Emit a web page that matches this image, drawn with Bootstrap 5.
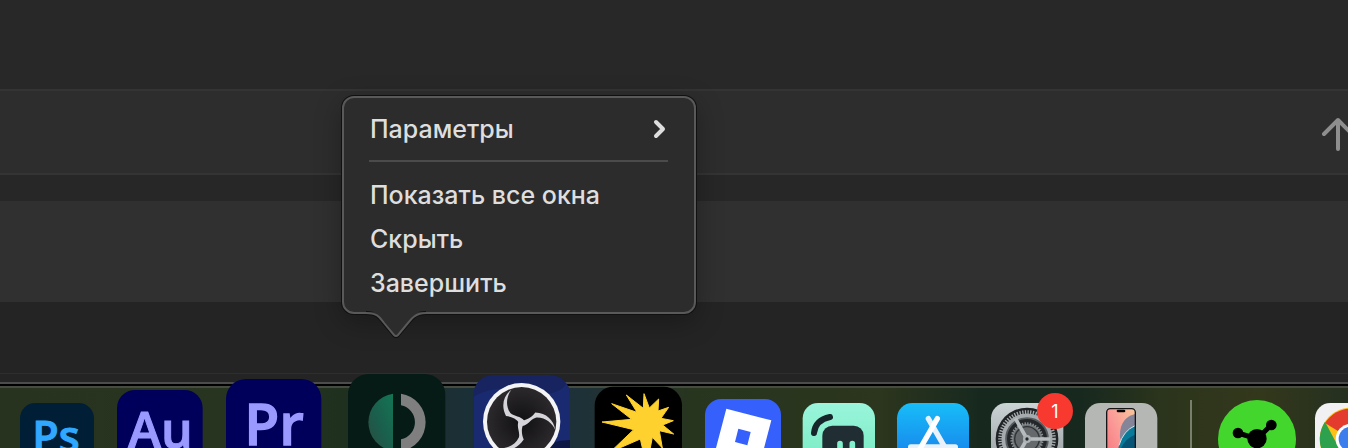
<!DOCTYPE html>
<html lang="ru">
<head>
<meta charset="utf-8">
<meta name="viewport" content="width=device-width, initial-scale=1">
<title>Dock</title>
<link href="https://cdn.jsdelivr.net/npm/bootstrap@5.3.0/dist/css/bootstrap.min.css" rel="stylesheet">
<style>
  body { font-family: Inter, "Liberation Sans", sans-serif; background: #242424; color: #dedede; }
  .desktop { height: 100vh; }
  .pane-top { height: 89px; background: #282828; }
  .pane-bar { height: 86px; padding-top: 4px; background: #2d2d2d; border-top: 2px solid #343434; border-bottom: 2px solid #343434; }
  .pane-gap { height: 26px; background: #272727; }
  .pane-input { height: 101px; background: #303030; }
  .pane-foot { height: 72px; background: #242424; border-bottom: 1px solid #2e2e2e; }
  .pane-edge { height: 10px; background: #242424; border-bottom: 2px solid #4c4c4c; }
  .send-link { margin-right: -8px; }
  .dock-shelf {
    height: 92px; gap: 22px; padding-left: 20px;
    border-top: 2px solid #000;
    box-shadow: inset 0 2px #454b40;
    background: linear-gradient(90deg, #27331f 0, #273420 220px, #20301f 340px, #1b2f36 460px, #1e3138 580px, #27351f 690px, #2c351d 880px, #17291f 980px, #17281f 1080px, #2b341c 1160px, #33381b 1260px, #253020 100%);
  }
  .dock-app svg { display: block; overflow: visible; }
  .dock-rule { width: 17px; height: 76px; padding-left: 11px; }
  .dock-rule::before { content: ""; display: block; width: 2px; height: 100%; background: #7a7f6c; }
  .dock-count { left: 46px; top: -10px; width: 36px; height: 36px; background: #f8392f; font-size: 18px; }
  .adobe { font-family: "Open Sans", "Noto Sans", sans-serif; font-weight: 600; }
  .popup {
    left: 342px; top: 96px; width: 354px; padding: 9px 26px 7px 25px; margin: 0;
    background: #2c2c2c; border: 2px solid #595959; border-radius: 12px;
    box-shadow: 0 0 0 1px #101010, 0 8px 28px rgba(0,0,0,.3);
  }
  .popup-item { height: 44px; padding: 0 1px; font-size: 25px; line-height: 44px; font-weight: 500; color: #dedede; }
  .popup-line { height: 2px; margin: 9px 0 11px; background: #4b4b4b; opacity: 1; border: 0; }
  .popup-tail { left: 20px; top: 100%; display: block; overflow: visible; }
</style>
</head>
<body>
<div class="desktop position-relative overflow-hidden">
  <main>
    <div class="pane-top"></div>
    <div class="pane-bar d-flex align-items-center justify-content-end">
      <a href="#" class="send-link" aria-label="Отправить">
        <svg class="d-block" width="36" height="36" viewBox="0 0 36 36" fill="none" stroke="#8e8e8e" stroke-width="4" stroke-linecap="round" stroke-linejoin="round"><path d="M18 33V4M4 18 18 4l14 14"/></svg>
      </a>
    </div>
    <div class="pane-gap"></div>
    <div class="pane-input"></div>
    <div class="pane-foot"></div>
    <div class="pane-edge"></div>
  </main>

  <nav class="dock-shelf d-flex align-items-end" aria-label="Dock">
    <button class="dock-app btn p-0 border-0 rounded-0 flex-shrink-0" aria-label="Photoshop">
      <svg width="75" height="73" viewBox="60 129 225 219"><rect x="60" y="129" width="222" height="219" rx="46" fill="#001e36"/><text class="adobe" x="97" y="277" font-size="129" fill="#31a8ff" stroke="#31a8ff" stroke-width="3">Ps</text></svg>
    </button>
    <button class="dock-app btn p-0 border-0 rounded-0 flex-shrink-0" aria-label="Audition">
      <svg width="87" height="86" viewBox="351 90 261 258"><rect x="351" y="90" width="257" height="258" rx="54" fill="#00005b"/><text class="adobe" x="384" y="263" font-size="150" fill="#9999ff" stroke="#9999ff" stroke-width="3">Au</text></svg>
    </button>
    <button class="dock-app btn p-0 border-0 rounded-0 flex-shrink-0" aria-label="Premiere Pro">
      <svg width="98" height="97" viewBox="18 57 294 291"><rect x="18" y="57" width="286" height="291" rx="60" fill="#00005b"/><text class="adobe" x="73" y="254" font-size="171" fill="#9999ff" stroke="#9999ff" stroke-width="4">Pr</text></svg>
    </button>
    <button class="dock-app btn p-0 border-0 rounded-0 flex-shrink-0" aria-label="Монитор">
      <svg width="101" height="102" viewBox="378 42 303 306">
        <defs><linearGradient id="teal" x1="1" y1="0" x2="0" y2="1"><stop offset="0" stop-color="#137554"/><stop offset=".55" stop-color="#1b5e4c"/><stop offset="1" stop-color="#2a4c40"/></linearGradient></defs>
        <rect x="384" y="42" width="292" height="306" rx="62" fill="#061b15"/>
        <path d="M519 101V273A87 87 0 0 1 519 101Z" fill="url(#teal)"/>
        <path d="M543 101A87 87 0 0 1 543 273V238A52 52 0 0 0 543 136Z" fill="#7f7f7f"/>
      </svg>
    </button>
    <button class="dock-app btn p-0 border-0 rounded-0 flex-shrink-0" aria-label="OBS">
      <svg width="103" height="101" viewBox="27 45 309 303">
        <defs>
          <clipPath id="obsClip"><rect x="40" y="45" width="290" height="303" rx="60"/></clipPath>
          <radialGradient id="obsDark"><stop offset="0" stop-color="#100f12"/><stop offset="1" stop-color="#2b292c"/></radialGradient>
        </defs>
        <g clip-path="url(#obsClip)"><rect x="40" y="45" width="290" height="303" fill="#17245f"/><path d="M40 110Q110 70 200 95T330 60V348H40Z" fill="#1a2a70"/><path d="M270 250Q300 240 330 240V348H250Z" fill="#0c1746"/></g>
        <circle cx="185" cy="185" r="116" fill="#f4f4f6"/><circle cx="185" cy="185" r="104" fill="url(#obsDark)"/>
        <g fill="#d5d4d8">
          <path d="M-31-99C-56-78-62-50-47-20C-32-18-16-12-7 2L7-7C-3-20-22-18-34-29C-50-52-45-80-31-99Z" transform="translate(185 188)"/>
          <path d="M-31-99C-56-78-62-50-47-20C-32-18-16-12-7 2L7-7C-3-20-22-18-34-29C-50-52-45-80-31-99Z" transform="translate(185 188) rotate(120)"/>
          <path d="M-31-99C-56-78-62-50-47-20C-32-18-16-12-7 2L7-7C-3-20-22-18-34-29C-50-52-45-80-31-99Z" transform="translate(185 188) rotate(240)"/>
          <circle cx="185" cy="188" r="9"/>
        </g>
      </svg>
    </button>
    <button class="dock-app btn p-0 border-0 rounded-0 flex-shrink-0" aria-label="Звезда">
      <svg width="89" height="90" viewBox="402 78 267 270">
        <rect x="404" y="80" width="262" height="268" rx="56" fill="#000"/>
        <path d="M552 101 568 144 596 117 594 153 626 142 603 175 640 182 608 195 641 222 598 212 607 264 577 232 560 320 541 237 451 276 521 209 426 186 515 178 455 131 531 157 499 105 550 145Z" fill="#fed12f" stroke="#fed12f" stroke-width="3" stroke-linejoin="round"/>
      </svg>
    </button>
    <button class="dock-app btn p-0 border-0 rounded-0 flex-shrink-0" aria-label="Roblox">
      <svg width="76" height="77" viewBox="45 117 228 231"><rect x="45" y="117" width="228" height="231" rx="48" fill="#3560fb"/><path d="M109 146 244 181 208 318 73 283ZM145 206 135 246 172 256 182 216Z" fill="#fff" fill-rule="evenodd"/></svg>
    </button>
    <button class="dock-app btn p-0 border-0 rounded-0 flex-shrink-0" aria-label="Streamlabs">
      <svg width="72" height="73" viewBox="339 129 216 219">
        <defs><linearGradient id="mint" x1="0" y1="0" x2="0" y2="1"><stop offset="0" stop-color="#9af5db"/><stop offset="1" stop-color="#72e9bd"/></linearGradient></defs>
        <rect x="338" y="129" width="217" height="219" rx="46" fill="url(#mint)"/>
        <path d="M372 219Q376 180 420 171" fill="none" stroke="#17262b" stroke-width="18" stroke-linecap="round"/>
        <rect x="397" y="197" width="124" height="110" rx="30" fill="#202e33"/>
        <path d="M450 251V275M487 251V275" stroke="#83efcd" stroke-width="17" stroke-linecap="round"/>
      </svg>
    </button>
    <button class="dock-app btn p-0 border-0 rounded-0 flex-shrink-0" aria-label="App Store">
      <svg width="72" height="73" viewBox="51 129 216 219">
        <defs><linearGradient id="store" x1="0" y1="0" x2="0" y2="1"><stop offset="0" stop-color="#18bdf8"/><stop offset="1" stop-color="#1670e8"/></linearGradient></defs>
        <rect x="51" y="129" width="216" height="219" rx="46" fill="url(#store)"/>
        <g stroke="#e9f1fb" stroke-width="16" stroke-linecap="round"><path d="M92 261H226"/><path d="M145 176 205 280"/><path d="M172 176 112 280" stroke="#fff"/></g>
      </svg>
    </button>
    <button class="dock-app btn p-0 border-0 rounded-0 flex-shrink-0 position-relative" aria-label="Системные настройки, 1">
      <svg width="72" height="73" viewBox="333 129 216 219">
        <defs><linearGradient id="steel" x1="0" y1="0" x2="0" y2="1"><stop offset="0" stop-color="#ccd4d5"/><stop offset="1" stop-color="#8e9597"/></linearGradient></defs>
        <rect x="333" y="129" width="217" height="219" rx="46" fill="url(#steel)"/>
        <circle cx="441" cy="237" r="94" fill="#202325"/>
        <circle cx="441" cy="237" r="80" fill="none" stroke="#a4aaad" stroke-width="13" stroke-dasharray="4 4"/>
        <circle cx="441" cy="237" r="71" fill="#565b5e" stroke="#a4aaad" stroke-width="11"/>
        <circle cx="441" cy="237" r="53" fill="#6c7173" stroke="#24272a" stroke-width="14"/>
        <circle cx="441" cy="237" r="46" fill="none" stroke="#8a8f91" stroke-width="8" stroke-dasharray="4 4"/>
        <circle cx="441" cy="237" r="37" fill="#65696b" stroke="#303335" stroke-width="4"/>
        <path d="M441 237 406 175M441 237 511 237M441 237 406 299" stroke="#b7bdbf" stroke-width="11"/>
        <circle cx="441" cy="237" r="12" fill="#adb3b5"/><circle cx="441" cy="237" r="5" fill="#25282a"/>
      </svg>
      <span class="dock-count position-absolute rounded-circle d-flex align-items-center justify-content-center text-white">1</span>
    </button>
    <button class="dock-app btn p-0 border-0 rounded-0 flex-shrink-0" aria-label="Видеоповтор iPhone">
      <svg width="72" height="73" viewBox="45 129 216 219">
        <defs>
          <linearGradient id="peach" x1="1" y1="0" x2="0" y2="1"><stop offset="0" stop-color="#f8c79c"/><stop offset=".5" stop-color="#fb9997"/><stop offset="1" stop-color="#f37078"/></linearGradient>
          <clipPath id="screen"><rect x="111" y="147" width="84" height="180" rx="10"/></clipPath>
        </defs>
        <rect x="45" y="129" width="217" height="219" rx="46" fill="#b5b7b4"/>
        <g clip-path="url(#screen)"><rect x="111" y="147" width="84" height="180" fill="url(#peach)"/><path d="M195 162Q147 175 150 232L160 265H195Z" fill="#85859a"/><path d="M195 197Q152 215 143 275V330H195Z" fill="#087b9a"/><path d="M195 224Q160 238 150 275L195 270Z" fill="#075476"/><path d="M195 197Q160 212 147 256" fill="none" stroke="#d1e5e8" stroke-width="3"/></g>
        <rect x="110" y="146" width="86" height="182" rx="11" fill="none" stroke="#151515" stroke-width="4"/>
        <rect x="140" y="149" width="26" height="8" rx="4" fill="#050505"/>
      </svg>
    </button>
    <div class="dock-rule flex-shrink-0"></div>
    <button class="dock-app btn p-0 border-0 rounded-0 flex-shrink-0" aria-label="Сеть">
      <svg width="74" height="76" viewBox="444 120 222 228"><circle cx="561" cy="237" r="117" fill="#43d72d"/><path d="M504 219 561 237 603 196M561 237V310" stroke="#000" stroke-width="15" fill="none"/><circle cx="561" cy="236" r="29"/><circle cx="504" cy="219" r="16"/><circle cx="604" cy="195" r="16"/></svg>
    </button>
    <button class="dock-app btn p-0 border-0 rounded-0 flex-shrink-0" aria-label="Chrome">
      <svg width="72" height="73" viewBox="732 129 216 219">
        <rect x="735" y="129" width="216" height="219" rx="46" fill="#f1f1f3"/>
        <circle cx="843" cy="237" r="94" fill="#fbc116"/>
        <path d="M843 237 765 189A94 94 0 0 1 924 190Z" fill="#e33b2e"/>
        <path d="M765 185A94 94 0 0 0 843 331L880 260 804 259Z" fill="#2da14d"/>
        <circle cx="843" cy="237" r="46" fill="#fff"/><circle cx="843" cy="237" r="37" fill="#3b7ded"/>
      </svg>
    </button>
  </nav>

  <div class="popup position-absolute" role="menu">
    <button class="popup-item btn border-0 w-100 d-flex align-items-center justify-content-between" role="menuitem" aria-haspopup="true">
      <span>Параметры</span>
      <svg width="14" height="20" viewBox="0 0 14 20" fill="none" stroke="#dedede" stroke-width="4" stroke-linecap="round" stroke-linejoin="round"><path d="M3 3 10 10 3 17"/></svg>
    </button>
    <hr class="popup-line">
    <button class="popup-item btn border-0 w-100 d-block text-start" role="menuitem">Показать все окна</button>
    <button class="popup-item btn border-0 w-100 d-block text-start" role="menuitem">Скрыть</button>
    <button class="popup-item btn border-0 w-100 d-block text-start" role="menuitem">Завершить</button>
    <svg class="popup-tail position-absolute" width="64" height="28" viewBox="0 0 64 28" fill="none">
      <path d="M2 1C14 1 16 6 20 11L30 23Q32 25 34 23L44 11C48 6 52 1 62 1" stroke="#101010" stroke-width="4"/>
      <path d="M2 0V1C14 1 16 6 20 11L30 23Q32 25 34 23L44 11C48 6 52 1 62 1V0Z" fill="#2c2c2c"/>
      <path d="M2 1C14 1 16 6 20 11L30 23Q32 25 34 23L44 11C48 6 52 1 62 1" stroke="#595959" stroke-width="2"/>
    </svg>
  </div>
</div>
<script src="https://cdn.jsdelivr.net/npm/bootstrap@5.3.0/dist/js/bootstrap.bundle.min.js"></script>
</body>
</html>
